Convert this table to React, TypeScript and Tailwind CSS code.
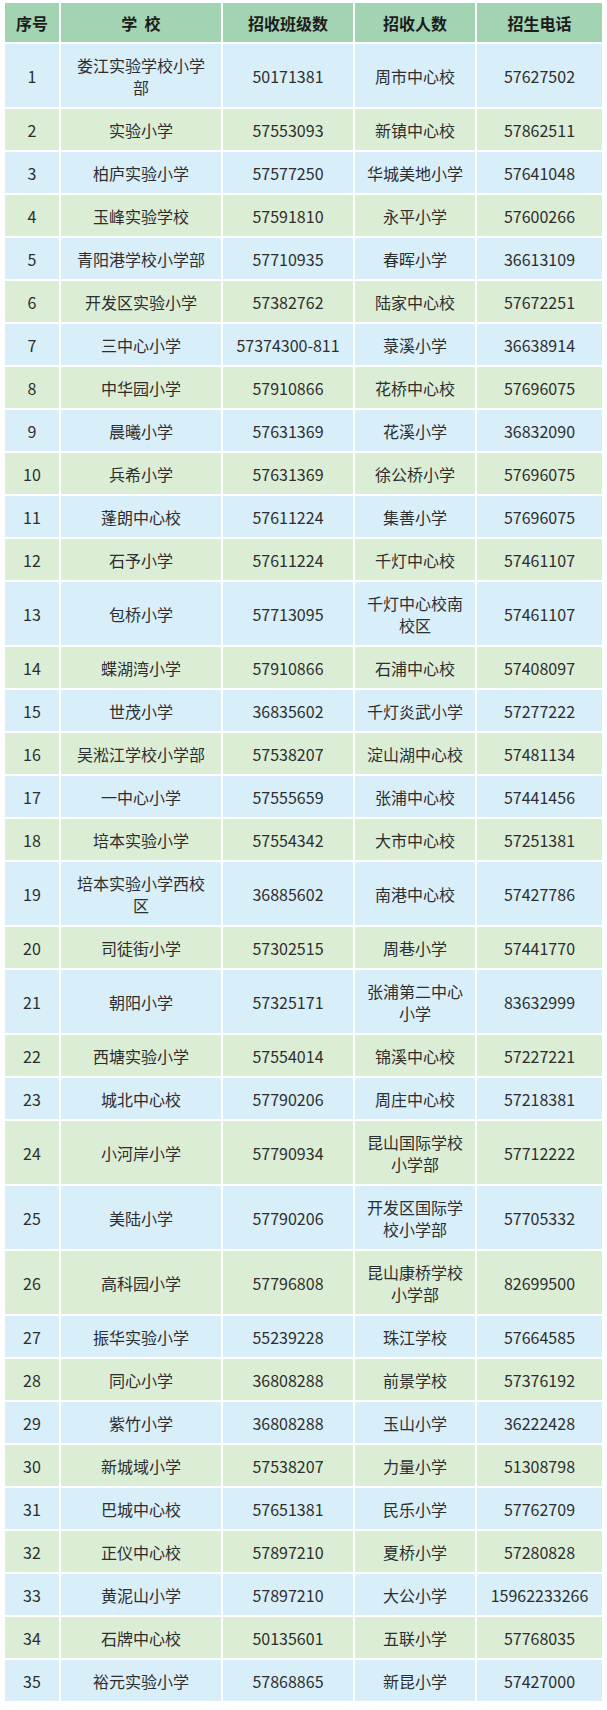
import React from "react";

type Row = [string, string, string, string, string];

const rows: Row[] = [
  ["1", "娄江实验学校小学部", "50171381", "周市中心校", "57627502"],
  ["2", "实验小学", "57553093", "新镇中心校", "57862511"],
  ["3", "柏庐实验小学", "57577250", "华城美地小学", "57641048"],
  ["4", "玉峰实验学校", "57591810", "永平小学", "57600266"],
  ["5", "青阳港学校小学部", "57710935", "春晖小学", "36613109"],
  ["6", "开发区实验小学", "57382762", "陆家中心校", "57672251"],
  ["7", "三中心小学", "57374300-811", "菉溪小学", "36638914"],
  ["8", "中华园小学", "57910866", "花桥中心校", "57696075"],
  ["9", "晨曦小学", "57631369", "花溪小学", "36832090"],
  ["10", "兵希小学", "57631369", "徐公桥小学", "57696075"],
  ["11", "蓬朗中心校", "57611224", "集善小学", "57696075"],
  ["12", "石予小学", "57611224", "千灯中心校", "57461107"],
  ["13", "包桥小学", "57713095", "千灯中心校南校区", "57461107"],
  ["14", "蝶湖湾小学", "57910866", "石浦中心校", "57408097"],
  ["15", "世茂小学", "36835602", "千灯炎武小学", "57277222"],
  ["16", "吴淞江学校小学部", "57538207", "淀山湖中心校", "57481134"],
  ["17", "一中心小学", "57555659", "张浦中心校", "57441456"],
  ["18", "培本实验小学", "57554342", "大市中心校", "57251381"],
  ["19", "培本实验小学西校区", "36885602", "南港中心校", "57427786"],
  ["20", "司徒街小学", "57302515", "周巷小学", "57441770"],
  ["21", "朝阳小学", "57325171", "张浦第二中心小学", "83632999"],
  ["22", "西塘实验小学", "57554014", "锦溪中心校", "57227221"],
  ["23", "城北中心校", "57790206", "周庄中心校", "57218381"],
  ["24", "小河岸小学", "57790934", "昆山国际学校小学部", "57712222"],
  ["25", "美陆小学", "57790206", "开发区国际学校小学部", "57705332"],
  ["26", "高科园小学", "57796808", "昆山康桥学校小学部", "82699500"],
  ["27", "振华实验小学", "55239228", "珠江学校", "57664585"],
  ["28", "同心小学", "36808288", "前景学校", "57376192"],
  ["29", "紫竹小学", "36808288", "玉山小学", "36222428"],
  ["30", "新城域小学", "57538207", "力量小学", "51308798"],
  ["31", "巴城中心校", "57651381", "民乐小学", "57762709"],
  ["32", "正仪中心校", "57897210", "夏桥小学", "57280828"],
  ["33", "黄泥山小学", "57897210", "大公小学", "15962233266"],
  ["34", "石牌中心校", "50135601", "五联小学", "57768035"],
  ["35", "裕元实验小学", "57868865", "新昆小学", "57427000"],
];

const doubleRows = new Set(["1", "13", "19", "21", "24", "25", "26"]);

const font = {
  fontFamily: '"Noto Sans CJK SC", "Noto Sans", sans-serif',
};

export default function App() {
  return (
    <div className="w-[607px] h-[1710px] bg-white pt-[3px] pl-[5px]" style={font}>
      <div className="w-[597px] grid grid-cols-[54px_160px_130px_120px_125px] gap-[2px] bg-white">
        {["序号", "学  校", "招收班级数", "招收人数", "招生电话"].map((h, i) => (
          <div
            key={i}
            className="h-[39px] bg-[#a2d4b4] flex items-center justify-center text-[16px] font-bold text-[#1c1c1c] whitespace-pre"
          >
            {h}
          </div>
        ))}
        {rows.map((r, ri) => {
          const bg = ri % 2 === 0 ? "bg-[#d8eef9]" : "bg-[#dcedd6]";
          const h = doubleRows.has(r[0]) ? "h-[63px]" : "h-[41px]";
          return r.map((c, ci) => (
            <div
              key={ri + "-" + ci}
              className={`${bg} ${h} flex items-center justify-center text-center text-[16px] leading-[22px] text-[#2e2e2e] ${
                ci === 1 ? "px-[10px]" : ci === 3 ? "px-[10px]" : "px-[2px]"
              }`}
            >
              <span>{c}</span>
            </div>
          ));
        })}
      </div>
    </div>
  );
}
